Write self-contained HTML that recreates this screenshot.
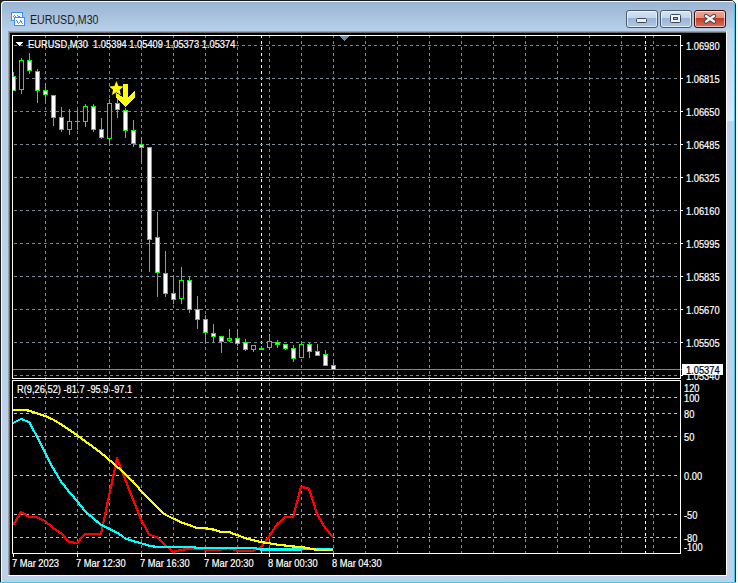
<!DOCTYPE html>
<html><head><meta charset="utf-8"><style>
html,body{margin:0;padding:0;}
body{width:738px;height:583px;position:relative;overflow:hidden;background:#1e1e1e;font-family:"Liberation Sans",sans-serif;}
.win{position:absolute;left:0;top:0;width:736px;height:590px;box-sizing:border-box;border:1px solid #1a1a1a;border-radius:5px 5px 0 0;
 background:linear-gradient(#99b4d1 0px,#b9d1ea 31px,#bcd2ea 100%);}
.win:before{content:"";position:absolute;left:0;top:0;right:0;bottom:0;border:1px solid rgba(255,255,255,0.9);border-right-color:#3cc8f0;border-radius:4px 4px 0 0;}
.client{position:absolute;left:8px;top:31px;width:718px;height:544px;background:#000;box-sizing:border-box;
 border-left:1px solid #a0a0a0;border-top:1px solid #a0a0a0;box-shadow:inset 1px 1px 0 #696969;}
.cf{position:absolute;left:8px;top:575px;width:719px;height:1px;background:#fff;}
.cr{position:absolute;left:726px;top:31px;width:1px;height:545px;background:#fff;}
.bot{position:absolute;left:0;top:582px;width:736px;height:1px;background:#3cc8f0;}
.t{position:absolute;color:#fff;font-size:10px;line-height:10px;white-space:pre;transform:scaleX(0.93);transform-origin:0 0;-webkit-text-stroke:0.2px currentColor;}
.title{position:absolute;left:30px;top:13px;font-size:12px;line-height:14px;color:#1e1e1e;white-space:pre;transform:scaleX(0.885);transform-origin:0 0;}
.btn{position:absolute;top:10px;height:18px;box-sizing:border-box;border:1px solid #4b5a70;border-radius:3px;
 background:linear-gradient(#d6e4f3 0,#c3d6ec 42%,#98b4d5 44%,#b0c9e4 100%);box-shadow:inset 0 0 0 1px rgba(255,255,255,0.6);}
.close{border-color:#3c0a0a;background:linear-gradient(#eaa898 0,#e0907e 42%,#c03a1d 44%,#d47262 100%);}
</style></head><body>
<div style="position:absolute;left:730px;top:0;width:8px;height:583px;background:#fff"></div>
<div class="win"></div>
<div class="client"></div>
<div class="cf"></div><div class="cr"></div>
<div class="bot"></div>
<div style="position:absolute;left:727px;top:28px;width:7px;height:93px;background:linear-gradient(#bdd3ea,#dae7f5)"></div>
<svg style="position:absolute;left:0;top:0" width="30" height="30" shape-rendering="crispEdges"><rect x="11" y="12" width="1" height="1" fill="#3f8cff"/><rect x="11" y="13" width="1" height="1" fill="#3f8cff"/><rect x="11" y="14" width="1" height="1" fill="#3f9a88"/><rect x="11" y="15" width="1" height="1" fill="#3f8cff"/><rect x="11" y="16" width="1" height="1" fill="#3f8cff"/><rect x="11" y="17" width="1" height="1" fill="#3f8cff"/><rect x="11" y="18" width="1" height="1" fill="#3f9a88"/><rect x="11" y="19" width="1" height="1" fill="#3f8cff"/><rect x="11" y="20" width="1" height="1" fill="#3f8cff"/><rect x="12" y="12" width="1" height="1" fill="#3f8cff"/><rect x="12" y="13" width="1" height="1" fill="#ffffff"/><rect x="12" y="14" width="1" height="1" fill="#ffffff"/><rect x="12" y="15" width="1" height="1" fill="#ffffff"/><rect x="12" y="16" width="1" height="1" fill="#ffffff"/><rect x="12" y="17" width="1" height="1" fill="#ffffff"/><rect x="12" y="18" width="1" height="1" fill="#ffffff"/><rect x="12" y="19" width="1" height="1" fill="#ffffff"/><rect x="12" y="20" width="1" height="1" fill="#3f8cff"/><rect x="13" y="12" width="1" height="1" fill="#3f9a88"/><rect x="13" y="13" width="1" height="1" fill="#ffffff"/><rect x="13" y="14" width="1" height="1" fill="#ffffff"/><rect x="13" y="15" width="1" height="1" fill="#ffffff"/><rect x="13" y="16" width="1" height="1" fill="#ffffff"/><rect x="13" y="17" width="1" height="1" fill="#ffffff"/><rect x="13" y="18" width="1" height="1" fill="#ffffff"/><rect x="13" y="19" width="1" height="1" fill="#ffffff"/><rect x="13" y="20" width="1" height="1" fill="#3f9a88"/><rect x="14" y="12" width="1" height="1" fill="#3f8cff"/><rect x="14" y="13" width="1" height="1" fill="#ffffff"/><rect x="14" y="14" width="1" height="1" fill="#ffffff"/><rect x="14" y="15" width="1" height="1" fill="#ffffff"/><rect x="14" y="16" width="1" height="1" fill="#ffffff"/><rect x="14" y="17" width="1" height="1" fill="#ffffff"/><rect x="14" y="18" width="1" height="1" fill="#ffffff"/><rect x="14" y="19" width="1" height="1" fill="#ffffff"/><rect x="14" y="20" width="1" height="1" fill="#3f8cff"/><rect x="15" y="12" width="1" height="1" fill="#3f8cff"/><rect x="15" y="13" width="1" height="1" fill="#ffffff"/><rect x="15" y="14" width="1" height="1" fill="#ffffff"/><rect x="15" y="15" width="1" height="1" fill="#ffffff"/><rect x="15" y="16" width="1" height="1" fill="#ffffff"/><rect x="15" y="17" width="1" height="1" fill="#ffffff"/><rect x="15" y="18" width="1" height="1" fill="#ffffff"/><rect x="15" y="19" width="1" height="1" fill="#ffffff"/><rect x="15" y="20" width="1" height="1" fill="#3f8cff"/><rect x="16" y="12" width="1" height="1" fill="#3f8cff"/><rect x="16" y="13" width="1" height="1" fill="#ffffff"/><rect x="16" y="14" width="1" height="1" fill="#ffffff"/><rect x="16" y="15" width="1" height="1" fill="#ffffff"/><rect x="16" y="16" width="1" height="1" fill="#ffffff"/><rect x="16" y="17" width="1" height="1" fill="#ffffff"/><rect x="16" y="18" width="1" height="1" fill="#ffffff"/><rect x="16" y="19" width="1" height="1" fill="#ffffff"/><rect x="16" y="20" width="1" height="1" fill="#3f8cff"/><rect x="17" y="12" width="1" height="1" fill="#3f9a88"/><rect x="17" y="13" width="1" height="1" fill="#ffffff"/><rect x="17" y="14" width="1" height="1" fill="#ffffff"/><rect x="17" y="15" width="1" height="1" fill="#ffffff"/><rect x="17" y="16" width="1" height="1" fill="#ffffff"/><rect x="17" y="17" width="1" height="1" fill="#ffffff"/><rect x="17" y="18" width="1" height="1" fill="#ffffff"/><rect x="17" y="19" width="1" height="1" fill="#ffffff"/><rect x="17" y="20" width="1" height="1" fill="#3f9a88"/><rect x="18" y="12" width="1" height="1" fill="#3f8cff"/><rect x="18" y="13" width="1" height="1" fill="#ffffff"/><rect x="18" y="14" width="1" height="1" fill="#ffffff"/><rect x="18" y="15" width="1" height="1" fill="#ffffff"/><rect x="18" y="16" width="1" height="1" fill="#ffffff"/><rect x="18" y="17" width="1" height="1" fill="#ffffff"/><rect x="18" y="18" width="1" height="1" fill="#ffffff"/><rect x="18" y="19" width="1" height="1" fill="#ffffff"/><rect x="18" y="20" width="1" height="1" fill="#3f8cff"/><rect x="19" y="12" width="1" height="1" fill="#3f8cff"/><rect x="19" y="13" width="1" height="1" fill="#ffffff"/><rect x="19" y="14" width="1" height="1" fill="#ffffff"/><rect x="19" y="15" width="1" height="1" fill="#ffffff"/><rect x="19" y="16" width="1" height="1" fill="#ffffff"/><rect x="19" y="17" width="1" height="1" fill="#ffffff"/><rect x="19" y="18" width="1" height="1" fill="#ffffff"/><rect x="19" y="19" width="1" height="1" fill="#ffffff"/><rect x="19" y="20" width="1" height="1" fill="#3f8cff"/><rect x="20" y="12" width="1" height="1" fill="#3f8cff"/><rect x="20" y="13" width="1" height="1" fill="#ffffff"/><rect x="20" y="14" width="1" height="1" fill="#ffffff"/><rect x="20" y="15" width="1" height="1" fill="#ffffff"/><rect x="20" y="16" width="1" height="1" fill="#ffffff"/><rect x="20" y="17" width="1" height="1" fill="#ffffff"/><rect x="20" y="18" width="1" height="1" fill="#ffffff"/><rect x="20" y="19" width="1" height="1" fill="#ffffff"/><rect x="20" y="20" width="1" height="1" fill="#3f8cff"/><rect x="21" y="12" width="1" height="1" fill="#3f9a88"/><rect x="21" y="13" width="1" height="1" fill="#ffffff"/><rect x="21" y="14" width="1" height="1" fill="#ffffff"/><rect x="21" y="15" width="1" height="1" fill="#ffffff"/><rect x="21" y="16" width="1" height="1" fill="#ffffff"/><rect x="21" y="17" width="1" height="1" fill="#ffffff"/><rect x="21" y="18" width="1" height="1" fill="#ffffff"/><rect x="21" y="19" width="1" height="1" fill="#ffffff"/><rect x="21" y="20" width="1" height="1" fill="#3f9a88"/><rect x="22" y="12" width="1" height="1" fill="#3f8cff"/><rect x="22" y="13" width="1" height="1" fill="#3f8cff"/><rect x="22" y="14" width="1" height="1" fill="#3f8cff"/><rect x="22" y="15" width="1" height="1" fill="#3f9a88"/><rect x="22" y="16" width="1" height="1" fill="#3f8cff"/><rect x="22" y="17" width="1" height="1" fill="#3f8cff"/><rect x="22" y="18" width="1" height="1" fill="#3f8cff"/><rect x="22" y="19" width="1" height="1" fill="#3f9a88"/><rect x="22" y="20" width="1" height="1" fill="#3f8cff"/><rect x="14" y="17" width="1" height="1" fill="#3f8cff"/><rect x="14" y="18" width="1" height="1" fill="#3f8cff"/><rect x="14" y="19" width="1" height="1" fill="#3f9a88"/><rect x="14" y="20" width="1" height="1" fill="#3f8cff"/><rect x="14" y="21" width="1" height="1" fill="#3f8cff"/><rect x="14" y="22" width="1" height="1" fill="#3f8cff"/><rect x="14" y="23" width="1" height="1" fill="#3f9a88"/><rect x="14" y="24" width="1" height="1" fill="#3f8cff"/><rect x="14" y="25" width="1" height="1" fill="#3f8cff"/><rect x="15" y="17" width="1" height="1" fill="#3f8cff"/><rect x="15" y="18" width="1" height="1" fill="#ffffff"/><rect x="15" y="19" width="1" height="1" fill="#ffffff"/><rect x="15" y="20" width="1" height="1" fill="#ffffff"/><rect x="15" y="21" width="1" height="1" fill="#ffffff"/><rect x="15" y="22" width="1" height="1" fill="#ffffff"/><rect x="15" y="23" width="1" height="1" fill="#ffffff"/><rect x="15" y="24" width="1" height="1" fill="#ffffff"/><rect x="15" y="25" width="1" height="1" fill="#3f8cff"/><rect x="16" y="17" width="1" height="1" fill="#3f9a88"/><rect x="16" y="18" width="1" height="1" fill="#ffffff"/><rect x="16" y="19" width="1" height="1" fill="#ffffff"/><rect x="16" y="20" width="1" height="1" fill="#ffffff"/><rect x="16" y="21" width="1" height="1" fill="#ffffff"/><rect x="16" y="22" width="1" height="1" fill="#ffffff"/><rect x="16" y="23" width="1" height="1" fill="#ffffff"/><rect x="16" y="24" width="1" height="1" fill="#ffffff"/><rect x="16" y="25" width="1" height="1" fill="#3f9a88"/><rect x="17" y="17" width="1" height="1" fill="#3f8cff"/><rect x="17" y="18" width="1" height="1" fill="#ffffff"/><rect x="17" y="19" width="1" height="1" fill="#ffffff"/><rect x="17" y="20" width="1" height="1" fill="#ffffff"/><rect x="17" y="21" width="1" height="1" fill="#ffffff"/><rect x="17" y="22" width="1" height="1" fill="#ffffff"/><rect x="17" y="23" width="1" height="1" fill="#ffffff"/><rect x="17" y="24" width="1" height="1" fill="#ffffff"/><rect x="17" y="25" width="1" height="1" fill="#3f8cff"/><rect x="18" y="17" width="1" height="1" fill="#3f8cff"/><rect x="18" y="18" width="1" height="1" fill="#ffffff"/><rect x="18" y="19" width="1" height="1" fill="#ffffff"/><rect x="18" y="20" width="1" height="1" fill="#ffffff"/><rect x="18" y="21" width="1" height="1" fill="#ffffff"/><rect x="18" y="22" width="1" height="1" fill="#ffffff"/><rect x="18" y="23" width="1" height="1" fill="#ffffff"/><rect x="18" y="24" width="1" height="1" fill="#ffffff"/><rect x="18" y="25" width="1" height="1" fill="#3f8cff"/><rect x="19" y="17" width="1" height="1" fill="#3f8cff"/><rect x="19" y="18" width="1" height="1" fill="#ffffff"/><rect x="19" y="19" width="1" height="1" fill="#ffffff"/><rect x="19" y="20" width="1" height="1" fill="#ffffff"/><rect x="19" y="21" width="1" height="1" fill="#ffffff"/><rect x="19" y="22" width="1" height="1" fill="#ffffff"/><rect x="19" y="23" width="1" height="1" fill="#ffffff"/><rect x="19" y="24" width="1" height="1" fill="#ffffff"/><rect x="19" y="25" width="1" height="1" fill="#3f8cff"/><rect x="20" y="17" width="1" height="1" fill="#3f9a88"/><rect x="20" y="18" width="1" height="1" fill="#ffffff"/><rect x="20" y="19" width="1" height="1" fill="#ffffff"/><rect x="20" y="20" width="1" height="1" fill="#ffffff"/><rect x="20" y="21" width="1" height="1" fill="#ffffff"/><rect x="20" y="22" width="1" height="1" fill="#ffffff"/><rect x="20" y="23" width="1" height="1" fill="#ffffff"/><rect x="20" y="24" width="1" height="1" fill="#ffffff"/><rect x="20" y="25" width="1" height="1" fill="#3f9a88"/><rect x="21" y="17" width="1" height="1" fill="#3f8cff"/><rect x="21" y="18" width="1" height="1" fill="#ffffff"/><rect x="21" y="19" width="1" height="1" fill="#ffffff"/><rect x="21" y="20" width="1" height="1" fill="#ffffff"/><rect x="21" y="21" width="1" height="1" fill="#ffffff"/><rect x="21" y="22" width="1" height="1" fill="#ffffff"/><rect x="21" y="23" width="1" height="1" fill="#ffffff"/><rect x="21" y="24" width="1" height="1" fill="#ffffff"/><rect x="21" y="25" width="1" height="1" fill="#3f8cff"/><rect x="22" y="17" width="1" height="1" fill="#3f8cff"/><rect x="22" y="18" width="1" height="1" fill="#ffffff"/><rect x="22" y="19" width="1" height="1" fill="#ffffff"/><rect x="22" y="20" width="1" height="1" fill="#ffffff"/><rect x="22" y="21" width="1" height="1" fill="#ffffff"/><rect x="22" y="22" width="1" height="1" fill="#ffffff"/><rect x="22" y="23" width="1" height="1" fill="#ffffff"/><rect x="22" y="24" width="1" height="1" fill="#ffffff"/><rect x="22" y="25" width="1" height="1" fill="#3f8cff"/><rect x="23" y="17" width="1" height="1" fill="#3f8cff"/><rect x="23" y="18" width="1" height="1" fill="#ffffff"/><rect x="23" y="19" width="1" height="1" fill="#ffffff"/><rect x="23" y="20" width="1" height="1" fill="#ffffff"/><rect x="23" y="21" width="1" height="1" fill="#ffffff"/><rect x="23" y="22" width="1" height="1" fill="#ffffff"/><rect x="23" y="23" width="1" height="1" fill="#ffffff"/><rect x="23" y="24" width="1" height="1" fill="#ffffff"/><rect x="23" y="25" width="1" height="1" fill="#3f8cff"/><rect x="24" y="17" width="1" height="1" fill="#3f9a88"/><rect x="24" y="18" width="1" height="1" fill="#3f8cff"/><rect x="24" y="19" width="1" height="1" fill="#3f8cff"/><rect x="24" y="20" width="1" height="1" fill="#3f8cff"/><rect x="24" y="21" width="1" height="1" fill="#3f9a88"/><rect x="24" y="22" width="1" height="1" fill="#3f8cff"/><rect x="24" y="23" width="1" height="1" fill="#3f8cff"/><rect x="24" y="24" width="1" height="1" fill="#3f8cff"/><rect x="24" y="25" width="1" height="1" fill="#3f9a88"/><rect x="13" y="16" width="1" height="1" fill="#3f8cff"/><rect x="14" y="15" width="1" height="1" fill="#3f8cff"/><rect x="15" y="16" width="1" height="1" fill="#3f8cff"/><rect x="17" y="15" width="1" height="1" fill="#3f8cff"/><rect x="18" y="16" width="1" height="1" fill="#3f8cff"/><rect x="19" y="16" width="1" height="1" fill="#3f8cff"/><rect x="16" y="20" width="1" height="1" fill="#3f8cff"/><rect x="17" y="21" width="1" height="1" fill="#3f8cff"/><rect x="17" y="22" width="1" height="1" fill="#3f8cff"/><rect x="18" y="23" width="1" height="1" fill="#3f8cff"/><rect x="19" y="22" width="1" height="1" fill="#3f8cff"/><rect x="20" y="21" width="1" height="1" fill="#3f8cff"/><rect x="20" y="20" width="1" height="1" fill="#3f8cff"/><rect x="21" y="21" width="1" height="1" fill="#3f8cff"/><rect x="21" y="22" width="1" height="1" fill="#3f8cff"/><rect x="22" y="23" width="1" height="1" fill="#3f8cff"/></svg>
<div class="title">EURUSD,M30</div>
<div class="btn" style="left:626px;width:32px;"></div>
<div class="btn" style="left:660px;width:32px;"></div>
<div class="btn close" style="left:694px;width:32px;"></div>
<svg style="position:absolute;left:620px;top:8px" width="110" height="20" viewBox="620 8 110 20">
 <rect x="636.5" y="18.5" width="10" height="4" rx="1" fill="#eeeeee" stroke="#3b4658"/>
 <rect x="670.5" y="14.5" width="10" height="8" rx="1" fill="#f4f4f4" stroke="#3b4658"/>
 <rect x="673.5" y="17.5" width="4" height="2" fill="#9db4d0" stroke="#3b4658"/>
 <path d="M706 16 L714 21.5 M714 16 L706 21.5" stroke="#3b4658" stroke-width="4.4" stroke-linecap="round"/>
 <path d="M706 16 L714 21.5 M714 16 L706 21.5" stroke="#f4f4f4" stroke-width="2.4" stroke-linecap="round"/>
</svg>
<svg style="position:absolute;left:0;top:0" width="738" height="583" shape-rendering="crispEdges">
<defs><clipPath id="cm"><rect x="13" y="36" width="667" height="342"/></clipPath><clipPath id="ci"><rect x="13" y="381" width="667" height="172"/></clipPath></defs>
<path d="M45.5 35V554 M77.5 35V554 M109.5 35V554 M141.5 35V554 M173.5 35V554 M205.5 35V554 M237.5 35V554 M269.5 35V554 M301.5 35V554 M333.5 35V554 M365.5 35V554 M397.5 35V554 M429.5 35V554 M461.5 35V554 M493.5 35V554 M525.5 35V554 M557.5 35V554 M589.5 35V554 M621.5 35V554 M653.5 35V554" stroke="#778899" stroke-width="1" stroke-dasharray="3 3" fill="none"/>
<path d="M261.5 35V554M645.5 35V554" stroke="#ffffff" stroke-width="1" stroke-dasharray="3 3" fill="none"/>
<path d="M14 45.5H680 M14 78.5H680 M14 111.5H680 M14 144.5H680 M14 177.5H680 M14 210.5H680 M14 243.5H680 M14 276.5H680 M14 309.5H680 M14 342.5H680 M14 375.5H680" stroke="#778899" stroke-width="1" stroke-dasharray="3 3" fill="none"/>
<path d="M14 397.5H680 M14 413.5H680 M14 436.5H680 M14 475.5H680 M14 514.5H680 M14 537.5H680" stroke="#c0c0c0" stroke-width="1" stroke-dasharray="3 3" fill="none"/>
<rect x="13" y="369" width="669" height="1" fill="#778899"/>
<g clip-path="url(#cm)">
<path d="M13.5 72V91 M21.5 58V94 M29.5 53V74 M37.5 69V103 M45.5 83V103 M53.5 95V126 M61.5 107V132 M69.5 109V135 M77.5 109V130 M85.5 104V127 M93.5 104V132 M101.5 118V139 M109.5 99V143 M117.5 99V118 M125.5 108V138 M133.5 120V147 M141.5 137V164 M149.5 147V272 M157.5 212V297 M165.5 251V297 M173.5 277V304 M181.5 267V304 M189.5 276V313 M197.5 296V329 M205.5 315V342 M213.5 324V343 M221.5 336V353 M229.5 329V342 M237.5 329V346 M245.5 339V351 M253.5 345V352 M261.5 346V350 M269.5 334V350 M277.5 340V348 M285.5 344V350 M293.5 345V362 M301.5 343V358 M309.5 343V358 M317.5 344V356 M325.5 350V366 M333.5 362V370" stroke="#00ff00" stroke-width="1" fill="none"/>
<rect x="11" y="76" width="5" height="15" fill="#00ff00"/><rect x="12" y="77" width="3" height="13" fill="#ffffff"/>
<rect x="19" y="60" width="5" height="30" fill="#00ff00"/><rect x="20" y="61" width="3" height="28" fill="#000000"/>
<rect x="27" y="60" width="5" height="11" fill="#00ff00"/><rect x="28" y="61" width="3" height="9" fill="#ffffff"/>
<rect x="35" y="71" width="5" height="20" fill="#00ff00"/><rect x="36" y="72" width="3" height="18" fill="#ffffff"/>
<rect x="43" y="90" width="5" height="5" fill="#00ff00"/><rect x="44" y="91" width="3" height="3" fill="#ffffff"/>
<rect x="51" y="95" width="5" height="23" fill="#00ff00"/><rect x="52" y="96" width="3" height="21" fill="#ffffff"/>
<rect x="59" y="117" width="5" height="13" fill="#00ff00"/><rect x="60" y="118" width="3" height="11" fill="#ffffff"/>
<rect x="67" y="121" width="5" height="9" fill="#00ff00"/><rect x="68" y="122" width="3" height="7" fill="#000000"/>
<rect x="75" y="121" width="5" height="1" fill="#00ff00"/>
<rect x="83" y="106" width="5" height="16" fill="#00ff00"/><rect x="84" y="107" width="3" height="14" fill="#000000"/>
<rect x="91" y="106" width="5" height="24" fill="#00ff00"/><rect x="92" y="107" width="3" height="22" fill="#ffffff"/>
<rect x="99" y="129" width="5" height="9" fill="#00ff00"/><rect x="100" y="130" width="3" height="7" fill="#ffffff"/>
<rect x="107" y="103" width="5" height="36" fill="#00ff00"/><rect x="108" y="104" width="3" height="34" fill="#000000"/>
<rect x="115" y="103" width="5" height="7" fill="#00ff00"/><rect x="116" y="104" width="3" height="5" fill="#ffffff"/>
<rect x="123" y="110" width="5" height="21" fill="#00ff00"/><rect x="124" y="111" width="3" height="19" fill="#ffffff"/>
<rect x="131" y="130" width="5" height="14" fill="#00ff00"/><rect x="132" y="131" width="3" height="12" fill="#ffffff"/>
<rect x="139" y="144" width="5" height="4" fill="#00ff00"/><rect x="140" y="145" width="3" height="2" fill="#ffffff"/>
<rect x="147" y="147" width="5" height="93" fill="#00ff00"/><rect x="148" y="148" width="3" height="91" fill="#ffffff"/>
<rect x="155" y="237" width="5" height="36" fill="#00ff00"/><rect x="156" y="238" width="3" height="34" fill="#ffffff"/>
<rect x="163" y="273" width="5" height="21" fill="#00ff00"/><rect x="164" y="274" width="3" height="19" fill="#ffffff"/>
<rect x="171" y="293" width="5" height="7" fill="#00ff00"/><rect x="172" y="294" width="3" height="5" fill="#ffffff"/>
<rect x="179" y="280" width="5" height="19" fill="#00ff00"/><rect x="180" y="281" width="3" height="17" fill="#000000"/>
<rect x="187" y="280" width="5" height="30" fill="#00ff00"/><rect x="188" y="281" width="3" height="28" fill="#ffffff"/>
<rect x="195" y="309" width="5" height="11" fill="#00ff00"/><rect x="196" y="310" width="3" height="9" fill="#ffffff"/>
<rect x="203" y="319" width="5" height="14" fill="#00ff00"/><rect x="204" y="320" width="3" height="12" fill="#ffffff"/>
<rect x="211" y="333" width="5" height="4" fill="#00ff00"/><rect x="212" y="334" width="3" height="2" fill="#ffffff"/>
<rect x="219" y="336" width="5" height="6" fill="#00ff00"/><rect x="220" y="337" width="3" height="4" fill="#ffffff"/>
<rect x="227" y="338" width="5" height="3" fill="#00ff00"/><rect x="228" y="339" width="3" height="1" fill="#000000"/>
<rect x="235" y="338" width="5" height="6" fill="#00ff00"/><rect x="236" y="339" width="3" height="4" fill="#ffffff"/>
<rect x="243" y="342" width="5" height="8" fill="#00ff00"/><rect x="244" y="343" width="3" height="6" fill="#ffffff"/>
<rect x="251" y="345" width="5" height="5" fill="#00ff00"/><rect x="252" y="346" width="3" height="3" fill="#000000"/>
<rect x="259" y="348" width="5" height="2" fill="#00ff00"/>
<rect x="267" y="341" width="5" height="7" fill="#00ff00"/><rect x="268" y="342" width="3" height="5" fill="#000000"/>
<rect x="275" y="342" width="5" height="3" fill="#00ff00"/><rect x="276" y="343" width="3" height="1" fill="#ffffff"/>
<rect x="283" y="344" width="5" height="5" fill="#00ff00"/><rect x="284" y="345" width="3" height="3" fill="#ffffff"/>
<rect x="291" y="348" width="5" height="11" fill="#00ff00"/><rect x="292" y="349" width="3" height="9" fill="#ffffff"/>
<rect x="299" y="344" width="5" height="14" fill="#00ff00"/><rect x="300" y="345" width="3" height="12" fill="#000000"/>
<rect x="307" y="344" width="5" height="8" fill="#00ff00"/><rect x="308" y="345" width="3" height="6" fill="#ffffff"/>
<rect x="315" y="351" width="5" height="5" fill="#00ff00"/><rect x="316" y="352" width="3" height="3" fill="#ffffff"/>
<rect x="323" y="354" width="5" height="12" fill="#00ff00"/><rect x="324" y="355" width="3" height="10" fill="#ffffff"/>
<rect x="331" y="365" width="5" height="5" fill="#00ff00"/><rect x="332" y="366" width="3" height="3" fill="#ffffff"/>
<path d="M123 84 H128.2 V97.2 L134.9 91.1 V97.8 L125.5 107.2 L116.2 97.8 V92.6 L123 97.6 Z" fill="#ffff00"/>
<path shape-rendering="geometricPrecision" d="M116.40 81.10 L118.43 86.01 L123.72 86.42 L119.68 89.87 L120.93 95.03 L116.40 92.25 L111.87 95.03 L113.12 89.87 L109.08 86.42 L114.37 86.01 Z" fill="#ffff00"/>
</g>
<g clip-path="url(#ci)">
<polyline points="13,525.2 21,512 29,516.8 37,517.1 45,521 53,527.9 61,533.2 69,541.8 77,543 85,533.6 93,533.6 101,533.6 109,496 117,458.4 125,479 133,499.7 141,519.3 149,534.5 157,537.2 165,544.8 173,551.9 181,549.9 189,548.8 197,548.8 205,549.5 213,549.5 221,549.5 229,548 237,550.8 245,550.8 253,550.8 261,547.3 269,536.5 277,524.5 285,517 293,517.4 301,486.8 309,488.7 317,513.7 325,527.6 333,537.3" stroke="#ff0000" stroke-width="2.2" fill="none" stroke-linejoin="round"/>
<polyline points="13,423 21,419 29,422 37,436.5 45,452.5 53,468 61,481.5 69,491.7 77,501 85,511 93,518.2 101,524.8 109,529 117,532.7 125,538.2 133,541 141,543.2 149,545.7 157,547 165,547 173,547 181,547 189,547 197,547.7 205,547.7 213,547.7 221,547.7 229,547.7 237,547.7 245,547.7 253,547.7 261,549.5 269,549.5 277,549.5 285,549.5 293,549.5 301,549.5 309,548.7 317,548.7 325,548.7 333,548.7" stroke="#00ffff" stroke-width="2.2" fill="none" stroke-linejoin="round"/>
<polyline points="13,410 21,410 29,410.5 37,413.3 45,416 53,419.5 61,424.3 69,429.8 77,435.1 85,441.1 93,446.9 101,452.9 109,459.7 117,466.7 125,473.8 133,481.5 141,490.9 149,499.1 157,507.3 165,514.5 173,518.5 181,522.2 189,525 197,528 205,528.2 213,529.5 221,531.8 229,532.1 237,535 245,538 253,540.1 261,542.1 269,543.2 277,544.6 285,545.5 293,546.5 301,547 309,548.4 317,549.9 325,549.9 333,549.9" stroke="#ffff00" stroke-width="2.2" fill="none" stroke-linejoin="round"/>
</g>
<rect x="12.5" y="35.5" width="668" height="343" stroke="#fff" fill="none"/>
<rect x="12.5" y="380.5" width="668" height="173" stroke="#fff" fill="none"/>
<path d="M681 45.5H683 M681 78.5H683 M681 111.5H683 M681 144.5H683 M681 177.5H683 M681 210.5H683 M681 243.5H683 M681 276.5H683 M681 309.5H683 M681 342.5H683 M681 375.5H683 M13.5 554V557 M77.5 554V557 M141.5 554V557 M205.5 554V557 M269.5 554V557 M333.5 554V557" stroke="#fff" stroke-width="1" fill="none"/>
<path d="M339.5 36H349.5L344.5 41.5Z" fill="#778899"/>
<path d="M16 42H23.5L19.75 46Z" fill="#fff"/>
</svg>
<div class="t" style="left:28px;top:40px">EURUSD,M30  1.05394 1.05409 1.05373 1.05374</div>
<div class="t" style="left:17px;top:385px">R(9,26,52) -81.7 -95.9 -97.1</div>
<div class="t" style="left:686px;top:42px">1.06980</div>
<div class="t" style="left:686px;top:75px">1.06815</div>
<div class="t" style="left:686px;top:108px">1.06650</div>
<div class="t" style="left:686px;top:141px">1.06485</div>
<div class="t" style="left:686px;top:174px">1.06325</div>
<div class="t" style="left:686px;top:207px">1.06160</div>
<div class="t" style="left:686px;top:240px">1.05995</div>
<div class="t" style="left:686px;top:273px">1.05835</div>
<div class="t" style="left:686px;top:306px">1.05670</div>
<div class="t" style="left:686px;top:339px">1.05505</div>
<div class="t" style="left:686px;top:372px">1.05340</div>
<div class="t" style="left:684px;top:384px">120</div>
<div class="t" style="left:684px;top:394px">100</div>
<div class="t" style="left:684px;top:410px">80</div>
<div class="t" style="left:684px;top:433px">50</div>
<div class="t" style="left:684px;top:472px">0.00</div>
<div class="t" style="left:684px;top:511px">-50</div>
<div class="t" style="left:684px;top:534px">-80</div>
<div class="t" style="left:684px;top:543px">-100</div>
<div class="t" style="left:12px;top:558.5px">7 Mar 2023</div>
<div class="t" style="left:76px;top:558.5px">7 Mar 12:30</div>
<div class="t" style="left:140px;top:558.5px">7 Mar 16:30</div>
<div class="t" style="left:204px;top:558.5px">7 Mar 20:30</div>
<div class="t" style="left:268px;top:558.5px">8 Mar 00:30</div>
<div class="t" style="left:332px;top:558.5px">8 Mar 04:30</div>
<div style="position:absolute;left:682px;top:364px;width:41px;height:11px;background:#fff"></div>
<div class="t" style="left:686px;top:366px;color:#000">1.05374</div>
</body></html>
